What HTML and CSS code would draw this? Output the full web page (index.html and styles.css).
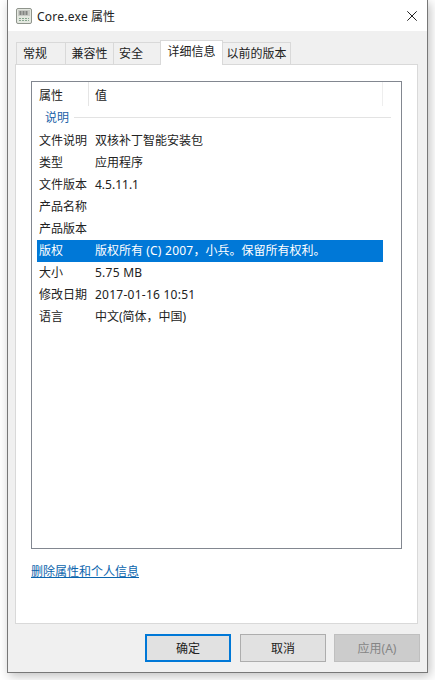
FILE: index.html
```html
<!DOCTYPE html>
<html lang="zh-CN">
<head>
  <meta charset="UTF-8" />
  <title>Core.exe 属性</title>
  <link rel="stylesheet" href="styles.css">
</head>
<body>
  <div class="window">
    <div class="titlebar">
      <svg class="app-icon" width="16" height="16" viewBox="0 0 16 16">
        <rect x="0.5" y="0.5" width="15" height="15" rx="1.5" fill="#e4e8e0" stroke="#8f948c"/>
        <rect x="2" y="2" width="12" height="6" fill="#c9cbc6"/>
        <path d="M3.5 4h9M3.5 6h9" stroke="#3c3f3c" stroke-width="1.2" stroke-dasharray="2 1"/>
        <path d="M3 10.5h10M3 12.5h10" stroke="#86a58e" stroke-width="1" stroke-dasharray="2 1"/>
      </svg>
      <span class="title"><span class="latin">Core.exe</span> 属性</span>
      <svg class="close" width="10" height="10" viewBox="0 0 10 10">
        <path d="M0.3 0.3l9.4 9.4M9.7 0.3l-9.4 9.4" stroke="#222" stroke-width="1" fill="none"/>
      </svg>
    </div>

    <div class="tabs">
      <div class="tab tab-general">常规</div>
      <div class="tab tab-compat">兼容性</div>
      <div class="tab tab-security">安全</div>
      <div class="tab tab-details active">详细信息</div>
      <div class="tab tab-previous">以前的版本</div>
    </div>

    <div class="panel">
      <div class="list">
        <div class="list-head">
          <div class="head-name">属性</div>
          <div class="head-value">值</div>
        </div>
        <div class="group"><span>说明</span><i></i></div>
        <div class="row"><div class="name">文件说明</div><div>双核补丁智能安装包</div></div>
        <div class="row"><div class="name">类型</div><div>应用程序</div></div>
        <div class="row"><div class="name">文件版本</div><div>4.5.11.1</div></div>
        <div class="row"><div class="name">产品名称</div><div></div></div>
        <div class="row"><div class="name">产品版本</div><div></div></div>
        <div class="row selected"><div class="name">版权</div><div>版权所有 <span class="latin">(C) 2007</span>，小兵。保留所有权利。</div></div>
        <div class="row"><div class="name">大小</div><div class="latin">5.75 MB</div></div>
        <div class="row"><div class="name">修改日期</div><div class="latin">2017-01-16 10:51</div></div>
        <div class="row"><div class="name">语言</div><div>中文(简体，中国)</div></div>
      </div>
      <a class="remove-link" href="#">删除属性和个人信息</a>
    </div>

    <div class="buttons">
      <button class="btn default">确定</button>
      <button class="btn cancel">取消</button>
      <button class="btn disabled">应用(A)</button>
    </div>
  </div>
</body>
</html>
```

FILE: styles.css
```css
* {
  box-sizing: border-box;
}

html, body {
  margin: 0;
  padding: 0;
  height: 680px;
  overflow: hidden;
  background: #fff;
  font-family: "Noto Sans", "Noto Sans CJK SC", sans-serif;
  font-size: 12px;
  color: #222;
}

.latin {
  letter-spacing: 0.25px;
}

.window {
  width: 421px;
  height: 673px;
  margin-left: 7px;
  background: #f0f0f0;
  border: 1px solid #777;
  border-top: 0;
  box-shadow: 2px 3px 10px rgba(0,0,0,0.25);
}

.titlebar {
  display: flex;
  align-items: center;
  height: 31px;
  background: #fff;
  padding-left: 8px;
}

.app-icon {
  margin-right: 5px;
}

.title {
  font-size: 12px;
  flex: 1;
}

.close {
  margin-right: 10px;
}

/* tabs */
.tabs {
  display: flex;
  align-items: flex-end;
  height: 33px;
  padding-left: 8px;
}

.tab {
  height: 22px;
  line-height: 21px;
  background: #f0f0f0;
  border: 1px solid #d9d9d9;
  border-bottom: 0;
  border-right: 0;
  text-align: center;
}

.tab-general { width: 49px; text-align: left; padding-left: 6px; }
.tab-compat { width: 48px; }
.tab-security { width: 47px; text-align: left; padding-left: 5px; }
.tab-details { width: 63px; }
.tab-previous { width: 69px; border-right: 1px solid #d9d9d9; }

.tab.active {
  height: 25px;
  line-height: 22px;
  background: #fff;
  position: relative;
  margin-bottom: -1px;
  border-right: 1px solid #d9d9d9;
  margin-right: -1px;
}

.panel {
  width: 403px;
  height: 560px;
  margin-left: 7px;
  background: #fff;
  border: 1px solid #d9d9d9;
  padding: 16px 15px 0;
}

.list {
  height: 468px;
  border: 1px solid #828790;
  padding-left: 5px;
}

.list-head {
  display: flex;
  height: 24px;
  line-height: 27px;
  width: 346px;
  border-right: 1px solid #eee;
}

.head-name {
  width: 52px;
  padding-left: 2px;
  border-right: 1px solid #e5e5e5;
}

.head-value {
  padding-left: 6px;
}

.group {
  display: flex;
  align-items: center;
  height: 22px;
  margin-bottom: 2px;
  padding-left: 8px;
  color: #1a5fa8;
}

.group i {
  flex: 1;
  height: 1px;
  margin: 0 10px 0 5px;
  background: #e3e3e3;
}

.row {
  display: flex;
  width: 346px;
  height: 22px;
  line-height: 22px;
}

.row .name {
  width: 58px;
  padding-left: 2px;
  flex: none;
}

.row.selected {
  background: #0078d7;
  color: #fff;
}

.remove-link {
  display: inline-block;
  margin-top: 13px;
  color: #0a64ad;
  text-decoration: underline;
}

/* bottom buttons */
.buttons {
  display: flex;
  gap: 8px;
  padding: 10px 0 0 137px;
}

.btn {
  width: 86px;
  height: 28px;
  padding: 0;
  background: #e1e1e1;
  border: 1px solid #adadad;
  font-family: inherit;
  font-size: 12px;
  color: #222;
}

.btn.default {
  border: 2px solid #0078d7;
}

.btn.cancel {
  margin-left: 1px;
}

.btn.disabled {
  background: #ccc;
  border-color: #bfbfbf;
  color: #858585;
}
```
